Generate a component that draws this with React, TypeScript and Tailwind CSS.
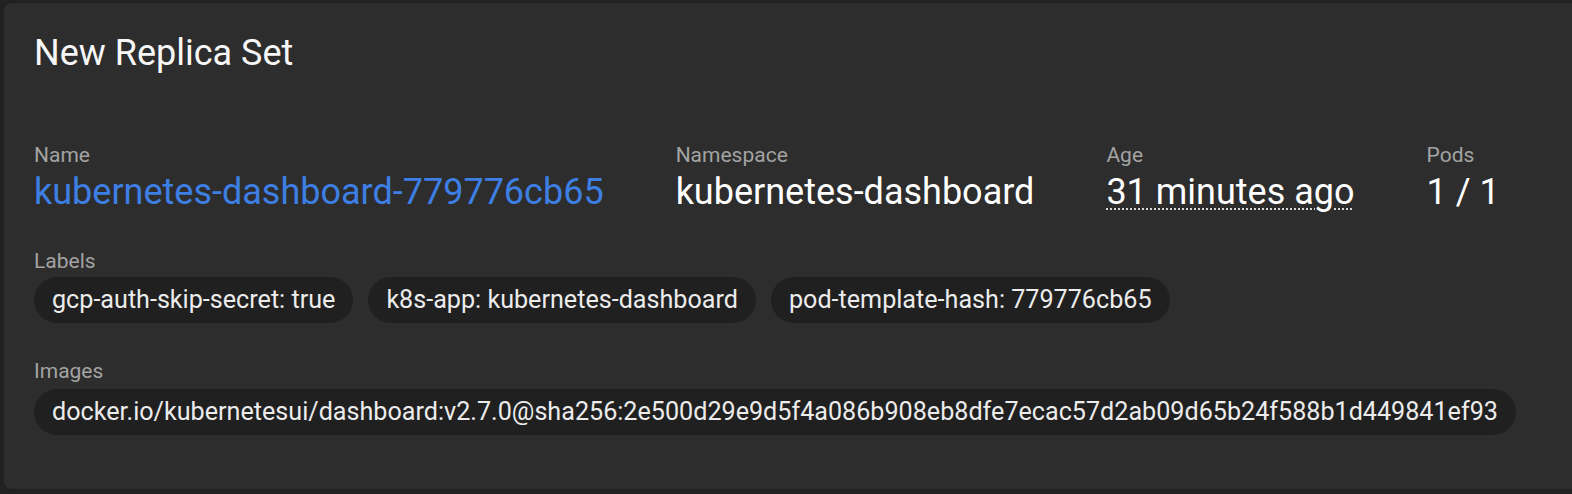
const labels = [
  "gcp-auth-skip-secret: true",
  "k8s-app: kubernetes-dashboard",
  "pod-template-hash: 779776cb65",
];

const images = [
  "docker.io/kubernetesui/dashboard:v2.7.0@sha256:2e500d29e9d5f4a086b908eb8dfe7ecac57d2ab09d65b24f588b1d449841ef93",
];

function Field({ label, children }: { label: string; children: React.ReactNode }) {
  return (
    <div className="flex flex-col gap-1">
      <span className="text-[21px] leading-6 text-[#a3a3a3]">{label}</span>
      <div className="text-[36px] leading-[42px]">{children}</div>
    </div>
  );
}

function Chip({ text }: { text: string }) {
  return (
    <span className="inline-flex h-[46px] items-center rounded-full bg-[#202020] px-[18px] text-[25.15px] text-[#ececec]">
      {text}
    </span>
  );
}

export default function App() {
  return (
    <div
      className="min-h-screen bg-[#212121] pt-[3px] pl-[4px]"
      style={{ fontFamily: "Roboto, 'Noto Sans', sans-serif" }}
    >
      <div className="w-[1600px] rounded-l-lg bg-[#2d2d2d] pt-[29px] pb-[54px] pl-[30px] text-white">
        {/* Title */}
        <h1 className="text-[36px] leading-[42px] text-[#f7f7f7]">New Replica Set</h1>

        {/* Summary */}
        <div className="mt-[69px] flex gap-[72px]">
          <Field label="Name">
            <span className="text-[#3d7fe4]">kubernetes-dashboard-779776cb65</span>
          </Field>
          <Field label="Namespace">kubernetes-dashboard</Field>
          <Field label="Age">
            <span className="underline decoration-dotted decoration-2 underline-offset-[4px] decoration-[#d8d8d8]">
              31 minutes ago
            </span>
          </Field>
          <Field label="Pods">1 / 1</Field>
        </div>

        {/* Labels */}
        <div className="mt-[36px] flex flex-col gap-1">
          <span className="text-[21px] leading-6 text-[#a3a3a3]">Labels</span>
          <div className="flex flex-wrap gap-[15px]">
            {labels.map((l) => (
              <Chip key={l} text={l} />
            ))}
          </div>
        </div>

        {/* Images */}
        <div className="mt-[36px] flex flex-col gap-[6px]">
          <span className="text-[21px] leading-6 text-[#a3a3a3]">Images</span>
          <div className="flex flex-wrap gap-[15px]">
            {images.map((i) => (
              <Chip key={i} text={i} />
            ))}
          </div>
        </div>
      </div>
    </div>
  );
}
